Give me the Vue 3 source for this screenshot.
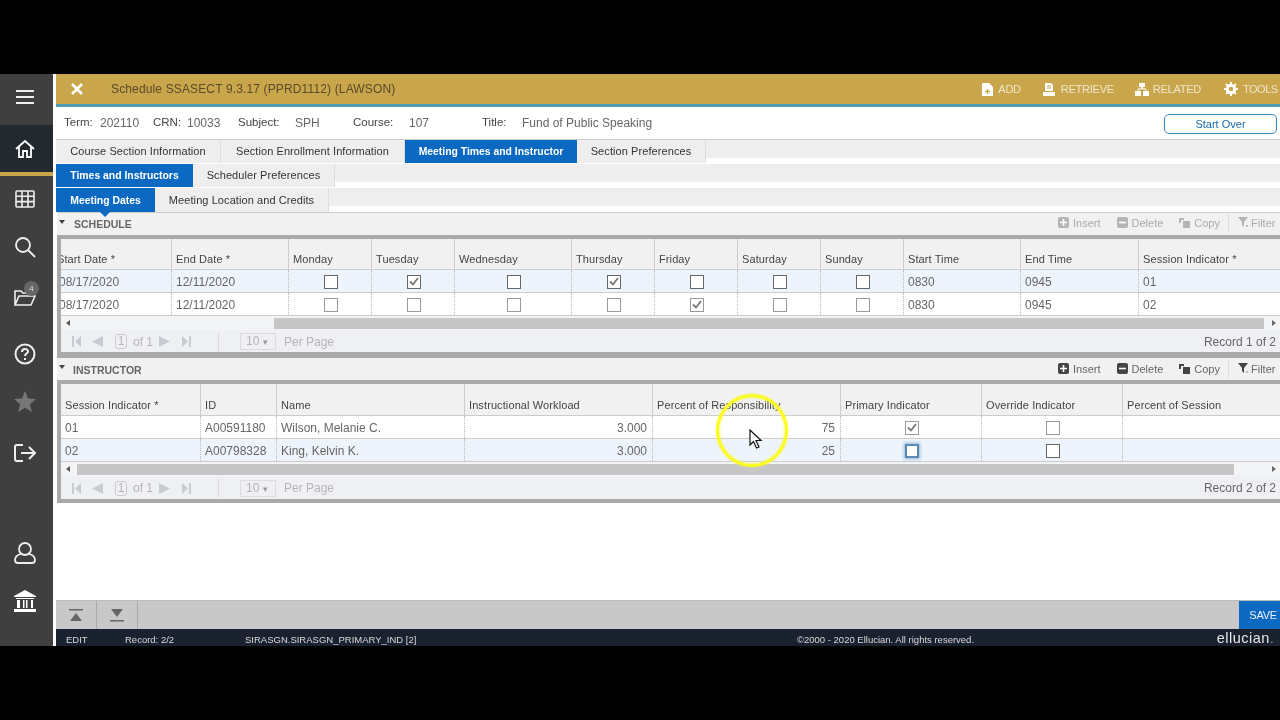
<script setup>
const navTop = [
  { k: 'menu', h: 51 }, { k: 'home', h: 47, active: true }
]
const navMid = [
  { k: 'grid', h: 45 }, { k: 'search', h: 52 }, { k: 'folder', h: 50 }, { k: 'help', h: 62 }, { k: 'star', h: 33 }, { k: 'exit', h: 70 }
]
const keys = [
  { l: 'Term:', v: '202110', w: 89, gap: 36 }, { l: 'CRN:', v: '10033', w: 85, gap: 34 }, { l: 'Subject:', v: 'SPH', w: 115, gap: 57 },
  { l: 'Course:', v: '107', w: 129, gap: 56 }, { l: 'Title:', v: 'Fund of Public Speaking', w: 300, gap: 40 }
]
const c = (on, cls = '') => ({ box: true, on, cls })
const sections = [
  {
    id: 'schedule', title: 'SCHEDULE', tools: 'off', record: 'Record 1 of 2', thumb: [213, 1203],
    cols: [111, 117, 83, 83, 117, 83, 83, 83, 83, 117, 118, 143],
    heads: ['Start Date *', 'End Date *', 'Monday', 'Tuesday', 'Wednesday', 'Thursday', 'Friday', 'Saturday', 'Sunday', 'Start Time', 'End Time', 'Session Indicator *'],
    rows: [
      { cur: true, cells: ['08/17/2020', '12/11/2020', c(false, 'dark'), c(true, 'dark'), c(false, 'dark'), c(true, 'dark'), c(false, 'dark'), c(false, 'dark'), c(false, 'dark'), '0830', '0945', '01'] },
      { cells: ['08/17/2020', '12/11/2020', c(false), c(false), c(false), c(false), c(true), c(false), c(false), '0830', '0945', '02'] }
    ]
  },
  {
    id: 'instructor', title: 'INSTRUCTOR', tools: 'on', record: 'Record 2 of 2', thumb: [16, 1173],
    cols: [140, 76, 188, 188, 188, 141, 141, 159],
    heads: ['Session Indicator *', 'ID', 'Name', 'Instructional Workload', 'Percent of Responsibility', 'Primary Indicator', 'Override Indicator', 'Percent of Session'],
    rows: [
      { cells: ['01', 'A00591180', 'Wilson, Melanie C.', { r: '3.000' }, { r: '75' }, c(true), c(false), ''] },
      { cur: true, cells: ['02', 'A00798328', 'King, Kelvin K.', { r: '3.000' }, { r: '25' }, c(false, 'focus'), c(false, 'dark'), ''] }
    ]
  }
]
const isObj = (x) => typeof x === 'object'
const gridCols = (cols) => ({ gridTemplateColumns: cols.map((n) => n + 'px').join(' ') })
const thumbStyle = (t) => ({ marginLeft: t[0] + 'px', width: t[1] - t[0] + 'px' })
</script>

<template>
  <div class="page">
    <div class="app">
      <aside class="side">
        <div v-for="n in navTop" :key="n.k" class="nav" :class="[n.k, { active: n.active }]" :style="{ height: n.h + 'px' }">
          <svg v-if="n.k === 'menu'" width="20" height="16" viewBox="0 0 20 16"><path d="M1 2h18M1 8h18M1 14h18" stroke="#eee" stroke-width="2" /></svg>
          <svg v-else width="20" height="20" viewBox="0 0 20 20" fill="none" stroke="#fff" stroke-width="1.8"><path d="M1 10 10 2l9 8M4 8v10h4v-6h4v6h4V8" /></svg>
        </div>
        <div class="goldline"></div>
        <div v-for="n in navMid" :key="n.k" class="nav" :style="{ height: n.h + 'px' }">
          <svg v-if="n.k === 'grid'" width="20" height="18" viewBox="0 0 20 18" fill="none" stroke="#eee" stroke-width="1.6"><rect x="1" y="1" width="18" height="16" rx="1" /><path d="M1 6.3h18M1 11.6h18M7 1v16M13 1v16" /></svg>
          <svg v-else-if="n.k === 'search'" width="22" height="22" viewBox="0 0 22 22" fill="none" stroke="#eee" stroke-width="1.8"><circle cx="9" cy="9" r="7" /><path d="m14 14 7 7" /></svg>
          <div v-else-if="n.k === 'folder'" class="folder">
            <svg width="22" height="18" viewBox="0 0 22 18" fill="none" stroke="#eee" stroke-width="1.6"><path d="M1 16V2h6l2 2h8v3M1 16l4-9h16l-4 9z" /></svg>
            <span class="badge">4</span>
          </div>
          <svg v-else-if="n.k === 'help'" width="22" height="22" viewBox="0 0 22 22" fill="none" stroke="#eee" stroke-width="2"><circle cx="11" cy="11" r="9.5" /><path d="M8 9c0-4 6-4 6-.5 0 2-3 2.200-3 4.500" /><path d="M11 15v2" /></svg>
          <svg v-else-if="n.k === 'star'" width="22" height="21" viewBox="0 0 22 21"><path d="m11 0 3 7.500 8 .6-6.100 5.100 2 7.800L11 16.800 4.100 21l2-7.800L0 8.100l8-.6z" fill="#777" /></svg>
          <svg v-else width="23" height="18" viewBox="0 0 23 18" fill="none" stroke="#eee" stroke-width="2"><path d="M9 1H3Q1 1 1 3v12q0 2 2 2h6M7 9h14M15 3l6 6-6 6" /></svg>
        </div>
        <div class="spacer"></div>
        <div class="nav user">
          <svg width="22" height="22" viewBox="0 0 22 22" fill="none" stroke="#eee" stroke-width="1.8"><circle cx="11" cy="7" r="6" /><path d="M7 12c-4 1-6 3-6 6 0 2 1 3 3 3h14c2 0 3-1 3-3 0-3-2-5-6-6" /></svg>
        </div>
        <div class="nav bank">
          <svg width="24" height="22" viewBox="0 0 24 22"><path d="M12 0 1 6v1h22V6zM3 8h18v1H3zM1 19h22v3H1zM4 10h3v8H4zM10 10h1.500v8H10zM13 10h1.500v8H13zM18 10h2v8h-2z" fill="#fff" /></svg>
        </div>
      </aside>

      <main class="main">
        <header class="head">
          <svg class="close" width="12" height="12" viewBox="0 0 12 12"><path d="m1 1 10 10M11 1 1 11" stroke="#fff" stroke-width="2.600" /></svg>
          <span class="title">Schedule SSASECT 9.3.17 (PPRD1112) (LAWSON)</span>
          <div class="actions">
            <span class="act a-add"><svg width="11" height="13" viewBox="0 0 11 13"><path d="M0 0h7l4 4v9H0z" fill="#fff" /><path d="M5.500 6v5M3 8.500h5" stroke="#c9a64b" stroke-width="1.400" /></svg>ADD</span>
            <span class="act a-ret"><svg width="12" height="13" viewBox="0 0 12 13"><path d="M2 0h6l2 2v6H2zM0 9h12v4H0z" fill="#fff" /><path d="M4 3h4M4 5h4" stroke="#c9a64b" /></svg>RETRIEVE</span>
            <span class="act a-rel"><svg width="14" height="13" viewBox="0 0 14 13"><path d="M4 0h6v4H4zM0 8h6v5H0zM8 8h6v5H8z" fill="#fff" /><path d="M6.500 4v2H3v2M7.500 4v2H11v2" fill="none" stroke="#fff" /></svg>RELATED</span>
            <span class="act a-tool"><svg width="14" height="14" viewBox="0 0 14 14"><circle cx="7" cy="7" r="3.800" fill="none" stroke="#fff" stroke-width="3" /><path d="M7 0v14M0 7h14M2 2l10 10M12 2 2 12" stroke="#fff" stroke-width="2" stroke-dasharray="2.500 9" /></svg>TOOLS</span>
          </div>
        </header>

        <div class="keyblock">
          <div class="keys">
            <span v-for="k in keys" :key="k.l" class="key" :style="{ width: k.w + 'px' }">
              <b :style="{ width: k.gap + 'px' }">{{ k.l }}</b><span>{{ k.v }}</span>
            </span>
          </div>
          <button class="start">Start Over</button>
        </div>

        <div class="tabs t1">
          <span class="tab w1">Course Section Information</span>
          <span class="tab w2">Section Enrollment Information</span>
          <span class="tab sel w3">Meeting Times and Instructor</span>
          <span class="tab w4">Section Preferences</span>
          <span class="fill"></span>
        </div>
        <div class="tabs t2">
          <span class="tab sel b1">Times and Instructors</span>
          <span class="tab b2">Scheduler Preferences</span>
          <span class="fill"></span>
        </div>
        <div class="tabs t3">
          <span class="tab sel notch c1">Meeting Dates</span>
          <span class="tab c2">Meeting Location and Credits</span>
          <span class="fill"></span>
        </div>

        <section v-for="s in sections" :key="s.id" class="section" :class="s.id">
          <div class="sec-head">
            <span class="caret"></span>
            <span class="sec-title">{{ s.title }}</span>
            <div class="tools" :class="s.tools">
              <span class="tool"><svg width="11" height="11" viewBox="0 0 11 11"><rect width="11" height="11" rx="2" class="ic" /><path d="M5.500 2v7M2 5.500h7" stroke="#fff" stroke-width="1.600" /></svg>Insert</span>
              <span class="tool"><svg width="11" height="11" viewBox="0 0 11 11"><rect width="11" height="11" rx="2" class="ic" /><path d="M2 5.500h7" stroke="#fff" stroke-width="1.600" /></svg>Delete</span>
              <span class="tool copy"><svg width="11" height="10" viewBox="0 0 11 10"><path d="M0 0h5v2H2v3H0z" class="ic" /><rect x="4" y="3" width="7" height="7" class="ic" /></svg>Copy</span>
              <span class="sep"></span>
              <span class="tool filter"><svg width="11" height="11" viewBox="0 0 11 11"><path d="M0 0h10L6 5v5L4 8V5z" class="ic" /><path d="M8 9h2" stroke="#888" /></svg>Filter</span>
            </div>
          </div>

          <div class="panel">
            <div class="grid hdr" :style="gridCols(s.cols)">
              <div v-for="(h, i) in s.heads" :key="h" class="hcell" :class="{ clip: s.id === 'schedule' && i === 0 }"><span>{{ h }}</span></div>
            </div>
            <div v-for="(r, ri) in s.rows" :key="ri" class="grid row" :class="{ cur: r.cur }" :style="gridCols(s.cols)">
              <div v-for="(cell, ci) in r.cells" :key="ci" class="cell" :class="{ clip: s.id === 'schedule' && ci === 0, center: isObj(cell) && cell.box, right: isObj(cell) && cell.r }">
                <span v-if="isObj(cell) && cell.box" class="cb" :class="cell.cls">
                  <svg v-if="cell.on" width="10" height="9" viewBox="0 0 10 9"><path d="m1 4.500 3 3L9 1" fill="none" stroke="#777" stroke-width="1.800" /></svg>
                </span>
                <span v-else-if="isObj(cell)">{{ cell.r }}</span>
                <span v-else>{{ cell }}</span>
              </div>
            </div>
            <div class="scroll">
              <i class="arrow al"></i>
              <div class="thumb" :style="thumbStyle(s.thumb)"></div>
              <i class="arrow ar"></i>
            </div>
            <div class="pager">
              <svg class="pg" width="9" height="11" viewBox="0 0 9 11"><path d="M0 0h2v11H0zM9 0v11L3 5.500z" /></svg>
              <svg class="pg p2" width="11" height="11" viewBox="0 0 11 11"><path d="M11 0v11L0 5.500z" /></svg>
              <span class="pgnum">1</span>
              <span class="pgof">of 1</span>
              <svg class="pg p3" width="11" height="11" viewBox="0 0 11 11"><path d="M0 0v11l11-5.500z" /></svg>
              <svg class="pg p4" width="9" height="11" viewBox="0 0 9 11"><path d="M7 0h2v11H7zM0 0v11l6-5.500z" /></svg>
              <span class="pgsep"></span>
              <span class="pgsel">10 <em>▾</em></span>
              <span class="pgper">Per Page</span>
              <span class="record">{{ s.record }}</span>
            </div>
          </div>
        </section>

        <div class="blank"></div>

        <div class="bottom">
          <span class="bbtn"><svg width="14" height="13" viewBox="0 0 14 13"><path d="M0 0h14v1.500H0z" fill="#666" /><path d="M7 4l6 8H1z" fill="#666" /></svg></span>
          <span class="bbtn"><svg width="14" height="13" viewBox="0 0 14 13"><path d="M1 0h12L7 8zM0 11h14v1.500H0z" fill="#666" /></svg></span>
          <span class="save">SAVE</span>
        </div>
        <footer class="status">
          <span class="s1">EDIT</span>
          <span class="s2">Record: 2/2</span>
          <span class="s3">SIRASGN.SIRASGN_PRIMARY_IND [2]</span>
          <span class="s4">©2000 - 2020 Ellucian. All rights reserved.</span>
          <span class="logo">ellucian<small>.</small></span>
        </footer>
      </main>

      <div class="halo"></div>
      <svg class="pointer" width="14" height="21" viewBox="0 0 14 21"><path d="M1 1v15l3.500-3.500L7.500 19l2.500-1-3-6.500h5z" fill="#fff" stroke="#111" stroke-width="1.200" /></svg>
    </div>
  </div>
</template>

<style>
html, body { margin: 0; background: #000; }
</style>

<style scoped>
.page { width: 1280px; height: 720px; background: #000; padding-top: 74px; box-sizing: border-box; overflow: hidden; font-family: "Liberation Sans", Arial, sans-serif; }
.app { position: relative; display: flex; width: 1280px; height: 572px; background: #fff; overflow: hidden; filter: blur(0.3px); }

.side { width: 53px; flex: none; background: #3f3f3f; display: flex; flex-direction: column; }
.nav { display: flex; align-items: center; justify-content: center; flex: none; padding-right: 3px; box-sizing: border-box; }
.nav.menu { padding-bottom: 6px; }
.nav.active { background: #222a30; }
.goldline { height: 4px; background: #c9a64b; flex: none; }
.spacer { flex: 1; }
.user { height: 48px; }
.bank { height: 48px; margin-bottom: 21px; }
.folder { position: relative; display: flex; }
.badge { position: absolute; left: 10px; top: -8px; width: 15px; height: 15px; border-radius: 50%; background: #666; color: #ddd; font-size: 8px; line-height: 15px; text-align: center; }

.main { width: 1224px; margin-left: 3px; flex: none; display: flex; flex-direction: column; }

.head { height: 30px; flex: none; display: flex; align-items: center; background: #c9a64b; border-bottom: 3px solid #4f9cb3; color: #fff; }
.close { margin-left: 15px; }
.title { margin-left: 28px; font-size: 12px; color: #5a4a2a; letter-spacing: 0.14px; }
.actions { margin-left: auto; display: flex; font-size: 11px; color: #efe6cb; letter-spacing: -0.25px; }
.act { display: flex; align-items: center; gap: 6px; margin-right: 23px; }
.a-add { margin-right: 22px; gap: 5px; }
.a-ret { margin-right: 21px; }
.a-rel { gap: 4px; }
.a-tool { width: 56px; margin-right: 0; gap: 5px; white-space: nowrap; letter-spacing: -0.5px; }

.keyblock { height: 32px; flex: none; display: flex; align-items: center; border-bottom: 1px solid #ccc; box-sizing: content-box; }
.keys { display: flex; margin-left: 8px; font-size: 12px; color: #666; }
.key { display: flex; }
.key b { font-weight: normal; color: #444; font-size: 11.500px; }
.start { margin: 2px 3px 0 auto; width: 113px; height: 20px; padding: 0; background: #fff; border: 1px solid #3d86b8; border-radius: 5px; color: #1b69a8; font: 11px "Liberation Sans", Arial, sans-serif; }

.tabs { display: flex; height: 24px; flex: none; font-size: 11px; color: #333; letter-spacing: 0.08px; }
.tab { display: flex; align-items: center; justify-content: center; background: #eee; border-right: 1px solid #ddd; box-sizing: border-box; height: 23px; padding-bottom: 1px; white-space: nowrap; position: relative; }
.tab.sel { background: #0b69c2; color: #fff; font-weight: bold; font-size: 10.400px; letter-spacing: 0; border-right: 0; }
.t3 .tab { height: 24px; padding-bottom: 0; }
.fill { flex: 1; height: 18px; background: #eee; }
.w1 { width: 165px; } .w2 { width: 184px; } .w3 { width: 172px; } .w4 { width: 129px; }
.b1 { width: 137px; } .b2 { width: 142px; }
.c1 { width: 99px; } .c2 { width: 174px; }
.notch::after { content: ""; position: absolute; left: 44px; bottom: -5px; border: 5px solid transparent; border-bottom: 0; border-top-color: #0b69c2; z-index: 2; }

.section { margin-left: 1px; flex: none; }
.sec-head { height: 23px; display: flex; align-items: center; background: #f1f1f1; box-sizing: border-box; border-top: 1px solid #ccc; color: #555; }
.instructor .sec-head { height: 22px; border-top: 0; }
.caret { margin-left: 2px; width: 0; height: 0; border: 3.500px solid transparent; border-top: 4px solid #444; border-bottom: 0; margin-top: -4px; }
.sec-title { margin-left: 9px; font-size: 10.500px; font-weight: bold; color: #666; }
.instructor .sec-title { margin-left: 8px; padding-top: 2px; }
.tools { margin-left: auto; display: flex; align-items: center; font-size: 11px; height: 100%; padding-bottom: 3px; box-sizing: border-box; }
.instructor .tools { padding-bottom: 1px; }
.tool { display: flex; align-items: center; gap: 4px; margin-right: 16px; white-space: nowrap; }
.tool.copy { margin-right: 8px; }
.tool.filter { margin-right: 0; width: 42px; gap: 2px; }
.sep { width: 1px; height: 18px; background: #ddd; margin-right: 9px; }
.tools.off { color: #aaa; }
.tools.off .ic { fill: #b5b5b5; }
.tools.on { color: #666; }
.tools.on .ic { fill: #444; }

.panel { border-left: 4px solid #aaa; border-top: 4px solid #aaa; border-bottom: 6px solid #aaa; background: #fff; }
.instructor .panel { border-bottom-width: 4px; }
.grid { display: grid; }
.hdr { height: 31px; background: #f1f1f1; border-bottom: 1px solid #ccc; box-sizing: border-box; }
.instructor .hdr { height: 32px; }
.hcell { display: flex; align-items: flex-end; padding: 0 0 4px 4px; box-sizing: border-box; font-size: 11px; letter-spacing: 0.1px; color: #444; border-right: 1px solid #ccc; white-space: nowrap; overflow: hidden; height: 30px; }
.instructor .hcell { height: 31px; padding-bottom: 4px; }
.row { height: 23px; border-bottom: 1px solid #ccc; box-sizing: border-box; background: #fff; }
.row.cur { background: #eef4fb; }
.cell { display: flex; align-items: center; padding: 1px 4px 0; box-sizing: border-box; font-size: 12px; color: #666; border-right: 1px dotted #bbb; white-space: nowrap; overflow: hidden; }
.cell.center { justify-content: center; padding: 1px 0 0 2px; }
.cell.right { justify-content: flex-end; padding-right: 5px; }
.hcell.clip, .cell.clip { padding-left: 0; }
.hcell.clip span { margin-left: -4px; }
.cell.clip span { margin-left: -2px; }
.cb { display: flex; align-items: center; justify-content: center; width: 14px; height: 14px; box-sizing: border-box; border: 1px solid #999; background: #fff; }
.cb.dark { border: 1.500px solid #666; }
.cb.focus { border: 2px solid #5b8bb5; box-shadow: 0 0 3px 1px #8fb8da; }

.scroll { height: 14px; position: relative; display: flex; align-items: center; background: #f3f4f6; }
.thumb { height: 11px; background: #c6c6c6; }
.arrow { position: absolute; width: 0; height: 0; border: 3.500px solid transparent; }
.al { left: 5px; border-left: 0; border-right: 4px solid #555; }
.ar { right: 4px; border-right: 0; border-left: 4px solid #666; }

.pager { height: 22px; display: flex; align-items: center; background: #eef0f4; font-size: 12px; color: #b5b5b5; padding-top: 1px; box-sizing: border-box; }
.instructor .pager { height: 23px; }
.pg { fill: #c8ccd2; margin-left: 11px; flex: none; }
.p2 { margin-left: 11px; }
.p3 { margin-left: 7px; }
.p4 { margin-left: 12px; }
.pgnum { margin-left: 12px; width: 12px; height: 15px; box-sizing: border-box; border: 1px solid #ccc; border-radius: 3px; text-align: center; line-height: 13px; }
.pgof { margin-left: 6px; width: 19px; white-space: nowrap; }
.pgsep { width: 1px; height: 18px; background: #d8d8d8; margin-left: 27px; }
.pgsel { margin-left: 21px; width: 36px; height: 17px; box-sizing: border-box; border: 1px solid #ddd; padding-left: 5px; line-height: 15px; }
.pgsel em { font-style: normal; font-size: 9px; color: #999; }
.pgper { margin-left: 8px; }
.record { margin-left: auto; margin-right: 4px; color: #666; }

.blank { flex: 1; }
.bottom { height: 29px; flex: none; display: flex; background: #c8c8c8; border-top: 1px solid #bbb; box-sizing: border-box; }
.bbtn { width: 41px; display: flex; align-items: center; justify-content: center; border-right: 1px solid #aaa; box-sizing: border-box; }
.save { margin-left: auto; width: 41px; display: flex; align-items: center; justify-content: flex-end; padding-right: 3px; box-sizing: border-box; background: #0b69c2; color: #eef; font-size: 11px; letter-spacing: -0.2px; }
.status { height: 17px; flex: none; position: relative; display: flex; align-items: center; background: #1a2230; color: #d8d8d8; font-size: 9.500px; padding-top: 3px; box-sizing: border-box; }
.s1 { margin-left: 10px; width: 59px; }
.s2 { width: 120px; }
.s3 { width: 552px; }
.logo { margin-left: auto; margin-right: 6px; margin-top: -2px; font-size: 14.500px; color: #e6e6e6; letter-spacing: 0.5px; }
.logo small { color: #999; font-size: 13px; }

.halo { position: absolute; left: 716px; top: 320px; width: 72px; height: 73px; box-sizing: border-box; border-radius: 50%; border: 3px solid #fbfb20; box-shadow: 0 0 2px #fbfb20, inset 0 0 3px #fbfb20; }
.pointer { position: absolute; left: 749px; top: 355px; }
</style>
